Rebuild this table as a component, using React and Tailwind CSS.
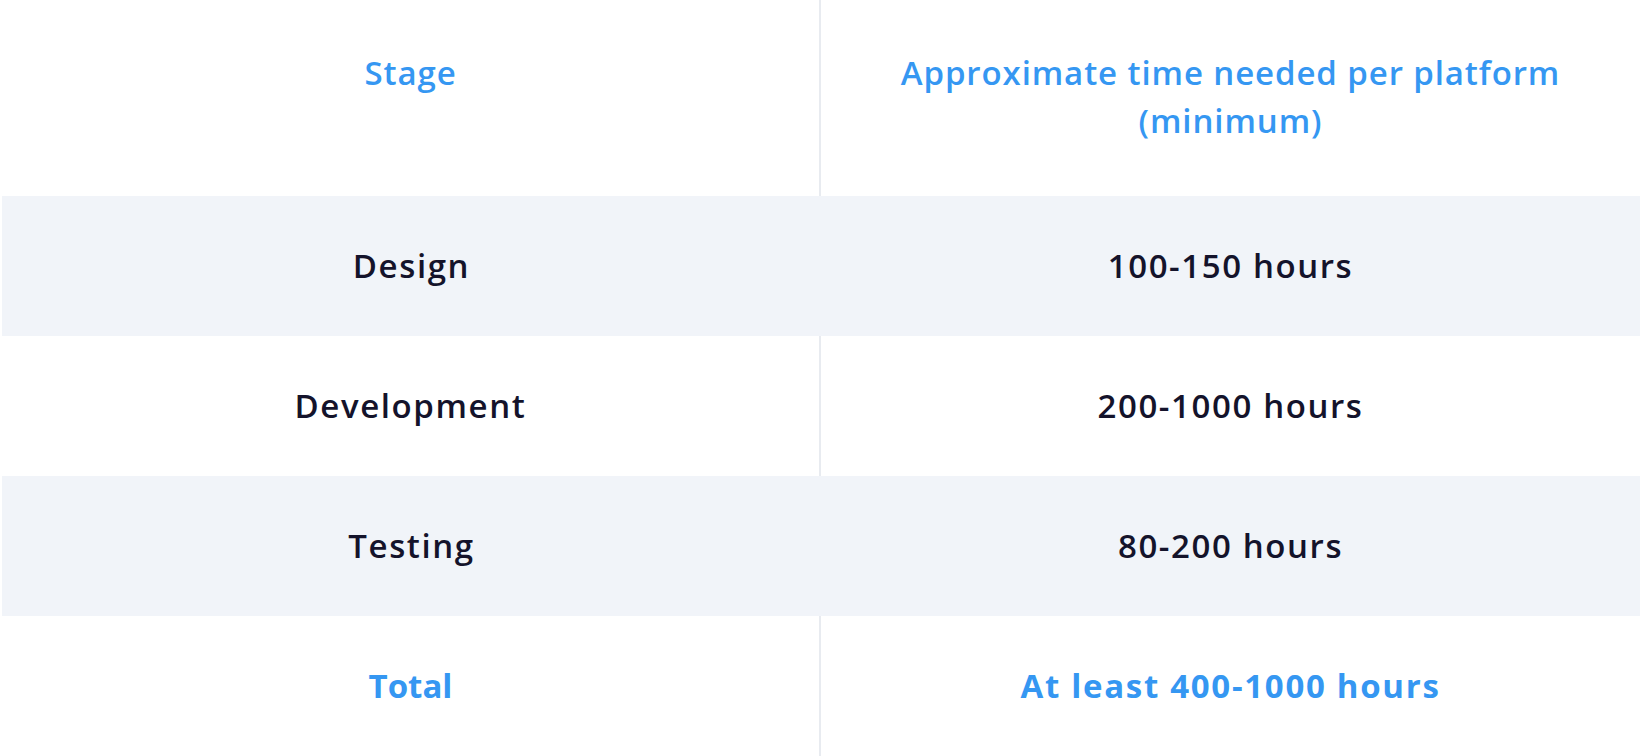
const rows = [
  { stage: "Design", time: "100-150 hours", shaded: true },
  { stage: "Development", time: "200-1000 hours", shaded: false },
  { stage: "Testing", time: "80-200 hours", shaded: true },
];

export default function App() {
  return (
    <div
      className="w-[1640px] h-[756px] overflow-hidden bg-white pl-[2px]"
      style={{ fontFamily: "'Open Sans', Lato, sans-serif" }}
    >
      <div className="grid grid-cols-2 h-[196px] text-[33px] leading-[48px] font-semibold tracking-[0.9px] text-[#3597f2]">
        <div className="flex items-start justify-center text-center pt-[49px] border-r-2 border-[#e8ebf0]">
          Stage
        </div>
        <div className="flex items-start justify-center text-center pt-[49px] px-4">
          <span>Approximate time needed per platform (minimum)</span>
        </div>
      </div>

      {rows.map((row) => (
        <div
          key={row.stage}
          className={
            row.shaded
              ? "grid grid-cols-2 h-[140px] bg-[#f1f4f9] text-[33px] font-semibold tracking-[1.6px] text-[#14132b]"
              : "grid grid-cols-2 h-[140px] bg-white text-[33px] font-semibold tracking-[1.6px] text-[#14132b]"
          }
        >
          <div
            className={
              row.shaded
                ? "flex items-center justify-center"
                : "flex items-center justify-center border-r-2 border-[#e8ebf0]"
            }
          >
            {row.stage}
          </div>
          <div className="flex items-center justify-center">{row.time}</div>
        </div>
      ))}

      <div className="grid grid-cols-2 h-[140px] text-[33px] font-bold text-[#3597f2]">
        <div className="flex items-center justify-center border-r-2 border-[#e8ebf0]">Total</div>
        <div className="flex items-center justify-center tracking-[1.7px]">At least 400-1000 hours</div>
      </div>
    </div>
  );
}
